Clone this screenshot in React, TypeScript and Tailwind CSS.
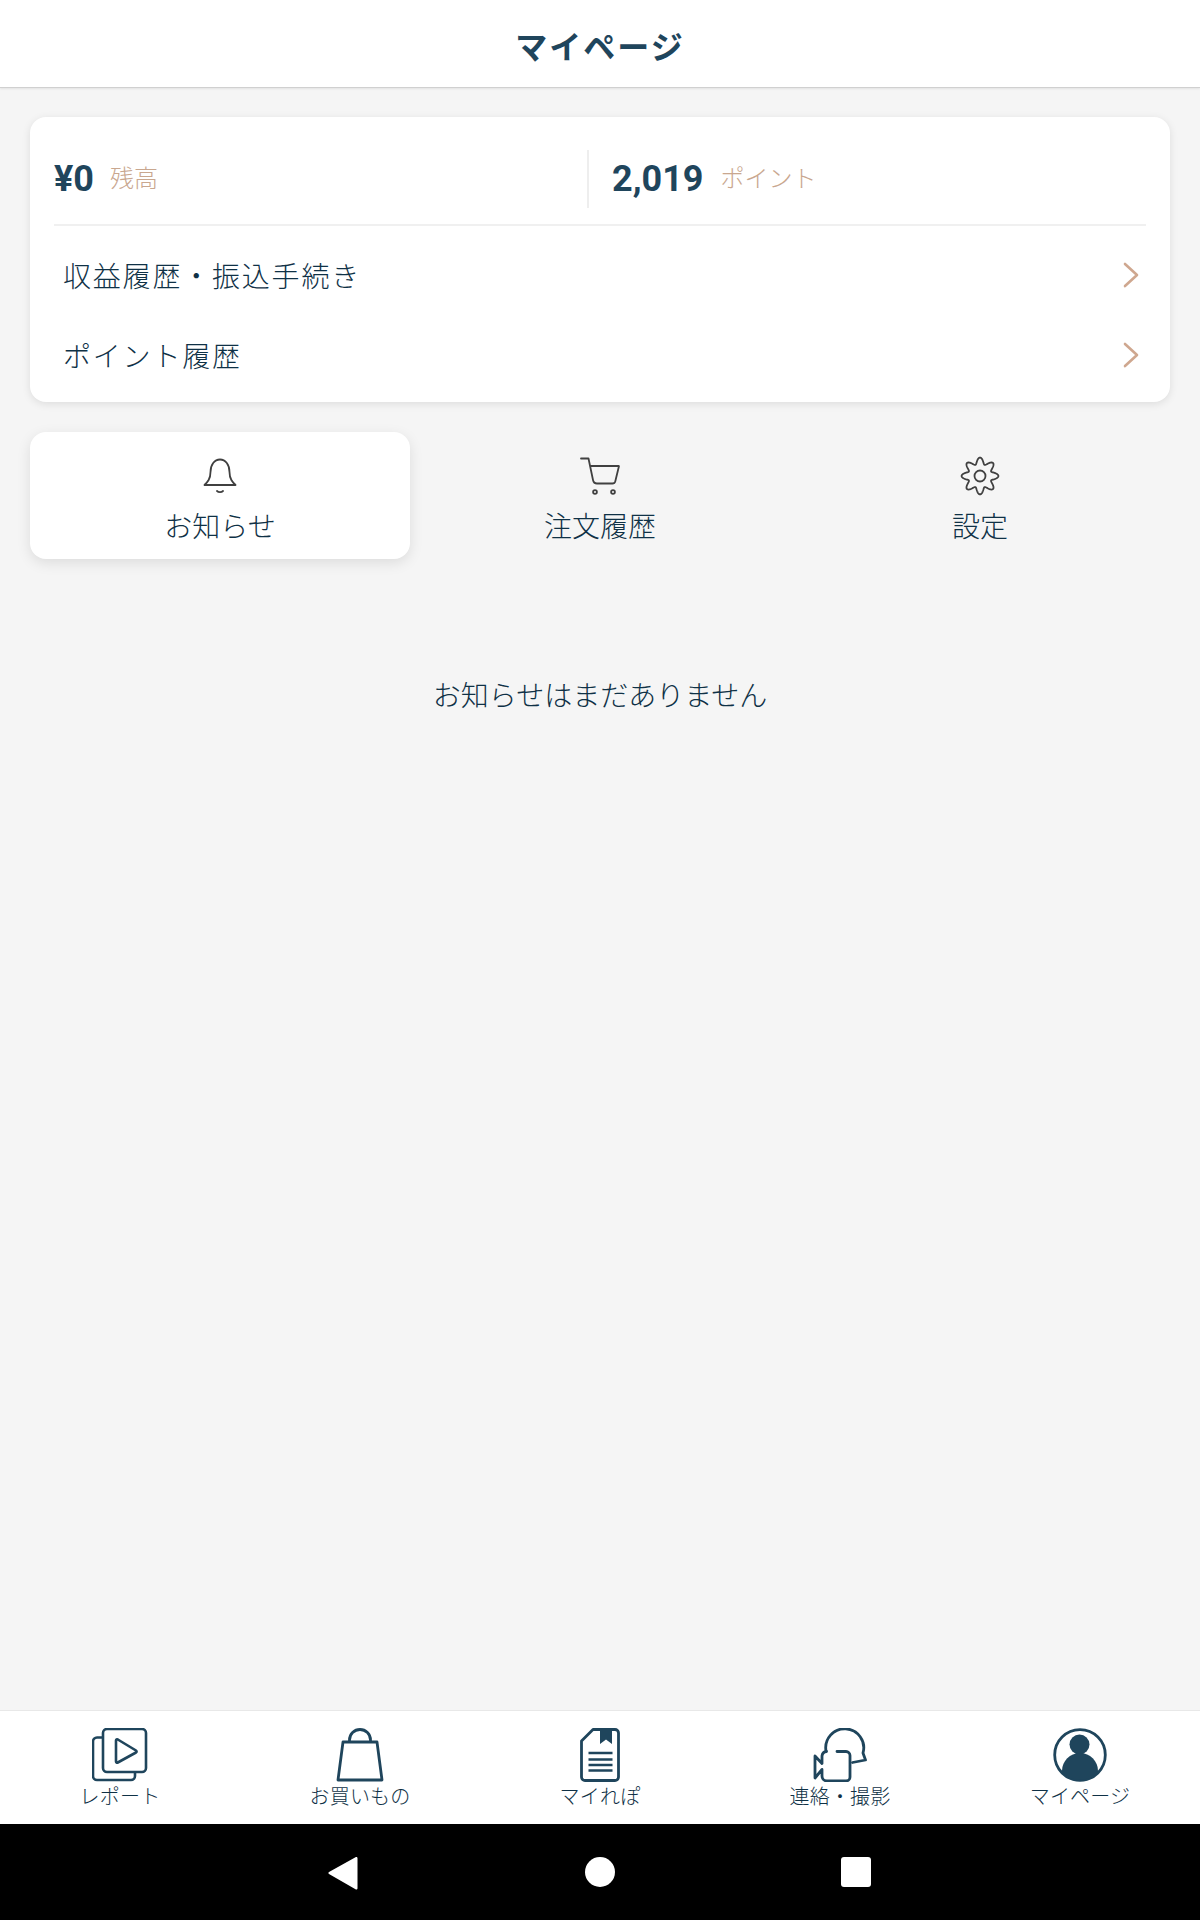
import React from "react";

const stack = 'Roboto, "Noto Sans CJK JP", sans-serif';

function Report() {
  return (
    <svg width="56" height="54" viewBox="0 0 56 54" fill="none" stroke="#1f455c" strokeWidth="2.6" strokeLinejoin="round">
      <path d="M11 9.500H5a4 4 0 0 0-4 4V48a4 4 0 0 0 4 4h34a4 4 0 0 0 4-4v-3" />
      <rect x="11" y="1" width="43" height="43" rx="4" />
      <path d="M24 12.500v21c0 1 .9 1.500 1.800 1L44 24.500c.8-.5.8-1.500 0-2L25.800 11.500c-.9-.5-1.800 0-1.800 1z" />
    </svg>
  );
}
function Bag() {
  return (
    <svg width="48" height="54" viewBox="0 0 48 54" fill="none" stroke="#1f455c" strokeWidth="2.8" strokeLinejoin="round">
      <path d="M7 14h34l5 38H2z" />
      <path d="M13.500 14v-2a10.500 10.500 0 0 1 21 0v2" />
    </svg>
  );
}
function Doc() {
  return (
    <svg width="40" height="54" viewBox="0 0 40 54" fill="none" stroke="#1f455c" strokeWidth="2.8" strokeLinejoin="round">
      <path d="M13 1.500h22a3.500 3.500 0 0 1 3.500 3.500v44a3.500 3.500 0 0 1-3.500 3.500H5A3.500 3.500 0 0 1 1.500 49V13z" />
      <path d="M20 1h12v15l-6-4.500-6 4.500z" fill="#1f455c" stroke="none" />
      <path d="M8.500 25h24M8.500 31.500h24M8.500 37h24M8.500 42.500h24" strokeWidth="2.400" />
    </svg>
  );
}
function Contact() {
  return (
    <svg width="54" height="54" viewBox="0 0 54 54" fill="none" stroke="#1f455c" strokeWidth="2.8" strokeLinejoin="round" strokeLinecap="round">
      <path d="M13 23A19 19 0 1 1 50 25l2.500 7-13 2.500" />
      <path d="M24 23.500h9a4 4 0 0 1 4 4V49a4 4 0 0 1-4 4H14a5 5 0 0 1-5-5v-6.500L2 50V28l7 7.500V28a5 5 0 0 1 4.500-4.500" />
    </svg>
  );
}
function Person() {
  return (
    <svg width="54" height="54" viewBox="0 0 54 54">
      <defs>
        <clipPath id="personClip"><circle cx="27" cy="27" r="25" /></clipPath>
      </defs>
      <circle cx="27" cy="27" r="25.300" fill="none" stroke="#1f455c" strokeWidth="2.800" />
      <g clipPath="url(#personClip)" fill="#1f455c">
        <circle cx="26.500" cy="16.500" r="10" />
        <path d="M9 54V43c0-10 8-18 18-18s18 8 18 18v11z" />
      </g>
    </svg>
  );
}
function Bell() {
  return (
    <svg width="34" height="36" viewBox="0 0 34 36" fill="none" stroke="#404040" strokeWidth="1.800" strokeLinecap="round" strokeLinejoin="round">
      <path d="M1.500 27h31c-3-3-6-6-6-13C26.500 6.500 22.500 1.500 17 1.500S7.500 6.500 7.500 14c0 7-3 10-6 13z" />
      <path d="M14 33c1.500 1.500 4.500 1.500 6 0" />
    </svg>
  );
}
function Cart() {
  return (
    <svg width="42" height="40" viewBox="0 0 42 40" fill="none" stroke="#404040" strokeWidth="1.800" strokeLinecap="round" strokeLinejoin="round">
      <path d="M2 2.500h7.500L14 24c.4 2.200 2 3.500 4 3.500h15.500c1.500 0 2.400-.7 2.800-2.200L40 10H11" />
      <circle cx="16" cy="36" r="1.900" />
      <circle cx="34" cy="36" r="1.900" />
    </svg>
  );
}
function gearPath() {
  const pts: string[] = [];
  const n = 240;
  for (let i = 0; i < n; i++) {
    const t = (i / n) * Math.PI * 2;
    const r = 15.2 + 3.2 * Math.cos(8 * t);
    const a = t - Math.PI / 2;
    pts.push(`${(20 + r * Math.cos(a)).toFixed(2)} ${(20 + r * Math.sin(a)).toFixed(2)}`);
  }
  return "M" + pts.join("L") + "z";
}
function Gear() {
  return (
    <svg width="40" height="40" viewBox="0 0 40 40" fill="none" stroke="#404040" strokeWidth="1.800" strokeLinejoin="round">
      <path d={gearPath()} />
      <circle cx="20" cy="20" r="5.500" />
    </svg>
  );
}
function Chevron() {
  return (
    <svg width="18" height="26" viewBox="0 0 18 26" fill="none" stroke="#cfa78f" strokeWidth="2.600" strokeLinecap="round" strokeLinejoin="round">
      <path d="M3 2l12 11L3 24" />
    </svg>
  );
}

function NavItem({ icon, label }: { icon: React.ReactNode; label: string }) {
  return (
    <div className="flex flex-col items-center">
      <div className="flex h-[56px] items-center justify-center">{icon}</div>
      <span className="mt-[1px] text-[20px] font-light leading-[26px] tracking-[0.2px] text-[#0f3146]">{label}</span>
    </div>
  );
}

function Tab({ icon, label, active }: { icon: React.ReactNode; label: string; active?: boolean }) {
  return (
    <div className={active ? "flex h-[127px] flex-col items-center rounded-[16px] bg-white pt-[24px] shadow-[0_4px_14px_rgba(0,0,0,0.1)]" : "flex h-[127px] flex-col items-center pt-[24px]"}>
      <div className="flex h-[40px] items-center justify-center">{icon}</div>
      <span className="mt-[12px] text-[28px] font-light leading-[40px] text-[#0f3146]">{label}</span>
    </div>
  );
}

export default function App() {
  return (
    <div className="flex h-[1920px] w-[1200px] flex-col bg-[#f5f5f5]" style={{ fontFamily: stack }}>
      <header className="flex h-[88px] items-center justify-center border-b border-[#d0d0d0] bg-white pt-[8px] shadow-[0_1px_2px_rgba(0,0,0,0.08)]">
        <h1 className="text-[32px] font-bold tracking-[2px] text-[#1f455c]">マイページ</h1>
      </header>

      <main className="flex flex-1 flex-col px-[30px] pt-[29px]">
        <section className="rounded-[16px] bg-white px-[24px] shadow-[0_2px_8px_rgba(0,0,0,0.1)]">
          <div className="flex h-[109px] items-center border-b-2 border-[#f0f0f0] pt-[16px]">
            <div className="flex w-[533px] items-center">
              <span className="text-[36px] font-bold text-[#1f455c]">¥0</span>
              <span className="ml-[16px] text-[24px] font-light text-[#c9a78f]">残高</span>
            </div>
            <div className="h-[58px] w-[2px] bg-[#eeeeee]" />
            <div className="flex items-center pl-[23px]">
              <span className="text-[36px] font-bold text-[#1f455c]">2,019</span>
              <span className="ml-[17px] text-[24px] font-light text-[#c9a78f]">ポイント</span>
            </div>
          </div>
          <div className="flex h-[96px] items-center justify-between pl-[9px] pr-[6px] pt-[2px]">
            <span className="mt-[5px] text-[28px] font-light tracking-[1.800px] text-[#0f3146]">収益履歴・振込手続き</span>
            <Chevron />
          </div>
          <div className="flex h-[80px] items-center justify-between pb-[15px] pl-[9px] pr-[6px]">
            <span className="mt-[7px] text-[28px] font-light tracking-[1.800px] text-[#0f3146]">ポイント履歴</span>
            <Chevron />
          </div>
        </section>

        <nav className="mt-[30px] grid grid-cols-3">
          <Tab active icon={<Bell />} label="お知らせ" />
          <Tab icon={<Cart />} label="注文履歴" />
          <Tab icon={<Gear />} label="設定" />
        </nav>

        <p className="mt-[116px] text-center text-[28px] font-light leading-[44px] text-[#0f3146]">お知らせはまだありません</p>
      </main>

      <footer className="grid h-[114px] grid-cols-5 border-t border-[#e8e8e8] bg-white pt-[16px]">
        <NavItem icon={<Report />} label="レポート" />
        <NavItem icon={<Bag />} label="お買いもの" />
        <NavItem icon={<Doc />} label="マイれぽ" />
        <NavItem icon={<Contact />} label="連絡・撮影" />
        <NavItem icon={<Person />} label="マイページ" />
      </footer>

      <div className="flex h-[96px] items-center justify-center bg-black">
        <div className="relative h-[96px] w-[600px]">
          <svg className="absolute left-[28px] top-[32px]" width="30" height="34" viewBox="0 0 30 34" fill="white">
            <path d="M27.500 1.200c1-.6 2 .1 2 1v30c0 1-1 1.600-2 1L1 18c-.8-.5-.8-1.500 0-2z" />
          </svg>
          <div className="absolute left-[285px] top-[33px] h-[30px] w-[30px] rounded-full bg-white" />
          <div className="absolute left-[541px] top-[33px] h-[30px] w-[30px] rounded-[3px] bg-white" />
        </div>
      </div>
    </div>
  );
}
